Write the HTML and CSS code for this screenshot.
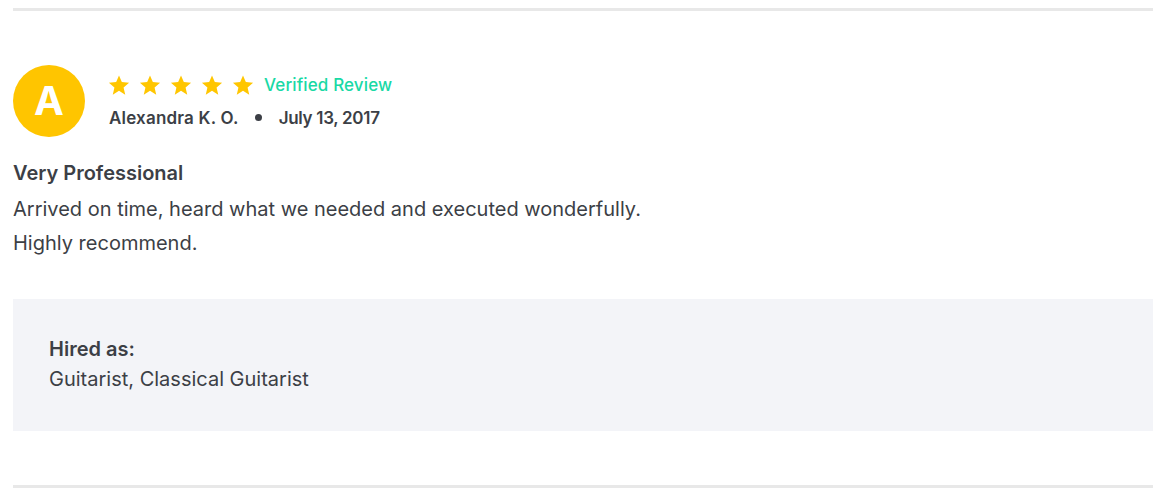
FILE: index.html
```html
<!DOCTYPE html>
<html>
<head>
<meta charset="utf-8">
<link rel="stylesheet" href="styles.css">
</head>
<body>
<div class="review">
  <div class="header">
    <div class="avatar">A</div>
    <div class="meta">
      <div class="rating">
        <div class="stars">
          <svg class="star" viewBox="0 0 24 24"><path d="M12 1.5l3.1 7.3 7.9.7-6 5.2 1.8 7.8L12 18.4l-6.8 4.1L7 14.7l-6-5.2 7.9-.7z"/></svg>
          <svg class="star" viewBox="0 0 24 24"><path d="M12 1.5l3.1 7.3 7.9.7-6 5.2 1.8 7.8L12 18.4l-6.8 4.1L7 14.7l-6-5.2 7.9-.7z"/></svg>
          <svg class="star" viewBox="0 0 24 24"><path d="M12 1.5l3.1 7.3 7.9.7-6 5.2 1.8 7.8L12 18.4l-6.8 4.1L7 14.7l-6-5.2 7.9-.7z"/></svg>
          <svg class="star" viewBox="0 0 24 24"><path d="M12 1.5l3.1 7.3 7.9.7-6 5.2 1.8 7.8L12 18.4l-6.8 4.1L7 14.7l-6-5.2 7.9-.7z"/></svg>
          <svg class="star" viewBox="0 0 24 24"><path d="M12 1.5l3.1 7.3 7.9.7-6 5.2 1.8 7.8L12 18.4l-6.8 4.1L7 14.7l-6-5.2 7.9-.7z"/></svg>
        </div>
        <span class="verified">Verified Review</span>
      </div>
      <div class="byline">
        <span class="name">Alexandra K. O.</span>
        <span class="dot"></span>
        <span class="date">July 13, 2017</span>
      </div>
    </div>
  </div>
  <h3 class="title">Very Professional</h3>
  <p class="body">Arrived on time, heard what we needed and executed wonderfully.<br>Highly recommend.</p>
  <div class="hired">
    <div class="hired-label">Hired as:</div>
    <div class="hired-value">Guitarist, Classical Guitarist</div>
  </div>
</div>
</body>
</html>
```
FILE: styles.css
```css
* { box-sizing: border-box; }
html, body { margin: 0; padding: 0; background: #fff; }
body {
  font-family: Inter, "Noto Sans", sans-serif;
  color: #3c3f46;
}
.review {
  margin: 8px 0 0 13px;
  width: 1140px;
  border-top: 3px solid #e8e8e8;
  border-bottom: 3px solid #e8e8e8;
  padding: 54px 0 54px;
}
.header {
  display: flex;
  align-items: center;
  gap: 24px;
  height: 72px;
}
.avatar {
  width: 72px;
  height: 72px;
  border-radius: 50%;
  background: #ffc500;
  color: #fff;
  font-weight: 700;
  font-size: 40px;
  line-height: 1;
  display: flex;
  align-items: center;
  justify-content: center;
  flex: none;
}
.meta { display: flex; flex-direction: column; gap: 9px; }
.rating { display: flex; align-items: center; height: 24px; gap: 10px; }
.stars { display: flex; gap: 9px; margin-left: -1px; }
.star { width: 22px; height: 22px; fill: #ffc600; display: block; }
.verified { color: #19d9a5; font-size: 17px; font-weight: 500; letter-spacing: 0.13px; }
.byline { display: flex; align-items: center; height: 24px; font-size: 17px; font-weight: 600; letter-spacing: 0.2px; }
.date { letter-spacing: -0.3px; }
.dot { width: 7px; height: 7px; border-radius: 50%; background: #3c3f46; margin: 0 17px 0 16px; }
.title { margin: 19px 0 0; font-size: 20px; line-height: 34px; font-weight: 600; }
.body { margin: 2px 0 0; font-size: 20px; line-height: 34px; }
.hired {
  margin-top: 39px;
  background: #f3f4f8;
  padding: 35px 36px 37px;
  font-size: 20px;
  line-height: 30px;
}
.hired-label { font-weight: 600; }
```
